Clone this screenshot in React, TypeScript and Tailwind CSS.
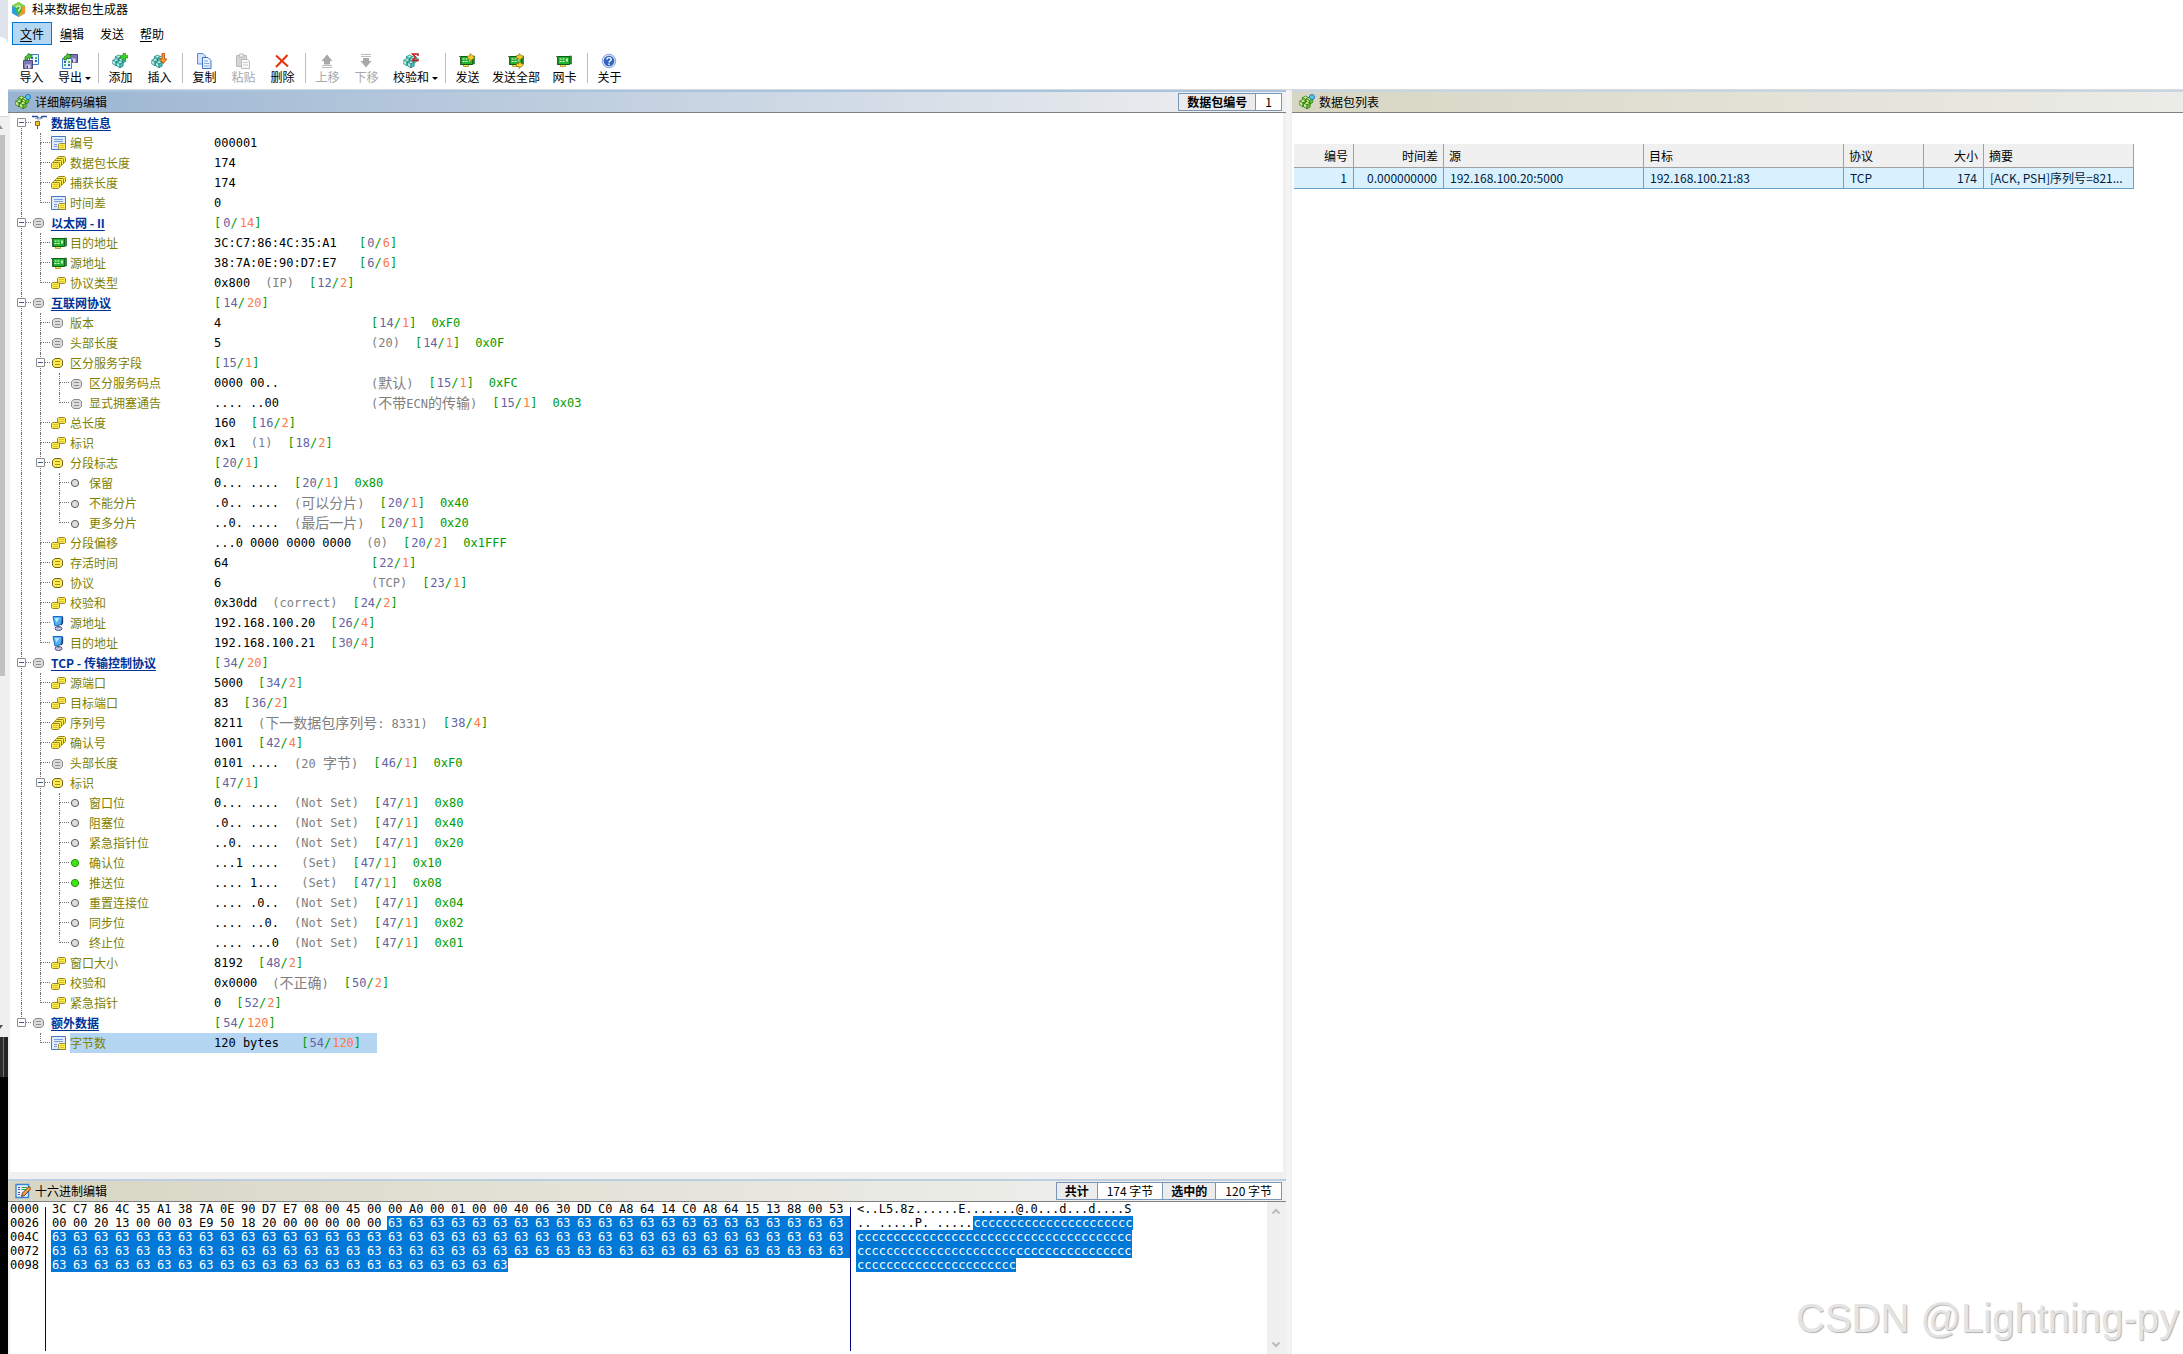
import { Fragment, type ReactNode } from "react";

type IconName = "info" | "page" | "stack" | "pair" | "gray" | "yellow" | "card" | "host" | "bit" | "bitOn";

type Field = {
  label: string;
  icon: IconName;
  value?: string;
  wide?: boolean;
  note?: string;
  range?: [number, number];
  mask?: string;
  selected?: boolean;
  children?: Field[];
};

const tree: Field[] = [
  {
    label: "数据包信息",
    icon: "info",
    children: [
      { label: "编号", icon: "page", value: "000001" },
      { label: "数据包长度", icon: "stack", value: "174" },
      { label: "捕获长度", icon: "stack", value: "174" },
      { label: "时间差", icon: "page", value: "0" },
    ],
  },
  {
    label: "以太网 - II",
    icon: "gray",
    range: [0, 14],
    children: [
      { label: "目的地址", icon: "card", value: "3C:C7:86:4C:35:A1 ", range: [0, 6] },
      { label: "源地址", icon: "card", value: "38:7A:0E:90:D7:E7 ", range: [6, 6] },
      { label: "协议类型", icon: "pair", value: "0x800", note: "(IP)", range: [12, 2] },
    ],
  },
  {
    label: "互联网协议",
    icon: "gray",
    range: [14, 20],
    children: [
      { label: "版本", icon: "gray", value: "4", wide: true, range: [14, 1], mask: "0xF0" },
      { label: "头部长度", icon: "gray", value: "5", wide: true, note: "(20)", range: [14, 1], mask: "0x0F" },
      {
        label: "区分服务字段",
        icon: "yellow",
        range: [15, 1],
        children: [
          { label: "区分服务码点", icon: "gray", value: "0000 00..", wide: true, note: "(默认)", range: [15, 1], mask: "0xFC" },
          { label: "显式拥塞通告", icon: "gray", value: ".... ..00", wide: true, note: "(不带ECN的传输)", range: [15, 1], mask: "0x03" },
        ],
      },
      { label: "总长度", icon: "pair", value: "160", range: [16, 2] },
      { label: "标识", icon: "pair", value: "0x1", note: "(1)", range: [18, 2] },
      {
        label: "分段标志",
        icon: "yellow",
        range: [20, 1],
        children: [
          { label: "保留", icon: "bit", value: "0... ....", range: [20, 1], mask: "0x80" },
          { label: "不能分片", icon: "bit", value: ".0.. ....", note: "(可以分片)", range: [20, 1], mask: "0x40" },
          { label: "更多分片", icon: "bit", value: "..0. ....", note: "(最后一片)", range: [20, 1], mask: "0x20" },
        ],
      },
      { label: "分段偏移", icon: "pair", value: "...0 0000 0000 0000", note: "(0)", range: [20, 2], mask: "0x1FFF" },
      { label: "存活时间", icon: "yellow", value: "64", wide: true, range: [22, 1] },
      { label: "协议", icon: "yellow", value: "6", wide: true, note: "(TCP)", range: [23, 1] },
      { label: "校验和", icon: "pair", value: "0x30dd", note: "(correct)", range: [24, 2] },
      { label: "源地址", icon: "host", value: "192.168.100.20", range: [26, 4] },
      { label: "目的地址", icon: "host", value: "192.168.100.21", range: [30, 4] },
    ],
  },
  {
    label: "TCP - 传输控制协议",
    icon: "gray",
    range: [34, 20],
    children: [
      { label: "源端口", icon: "pair", value: "5000", range: [34, 2] },
      { label: "目标端口", icon: "pair", value: "83", range: [36, 2] },
      { label: "序列号", icon: "stack", value: "8211", note: "(下一数据包序列号: 8331)", range: [38, 4] },
      { label: "确认号", icon: "stack", value: "1001", range: [42, 4] },
      { label: "头部长度", icon: "gray", value: "0101 ....", note: "(20 字节)", range: [46, 1], mask: "0xF0" },
      {
        label: "标识",
        icon: "yellow",
        range: [47, 1],
        children: [
          { label: "窗口位", icon: "bit", value: "0... ....", note: "(Not Set)", range: [47, 1], mask: "0x80" },
          { label: "阻塞位", icon: "bit", value: ".0.. ....", note: "(Not Set)", range: [47, 1], mask: "0x40" },
          { label: "紧急指针位", icon: "bit", value: "..0. ....", note: "(Not Set)", range: [47, 1], mask: "0x20" },
          { label: "确认位", icon: "bitOn", value: "...1 ....", note: " (Set)", range: [47, 1], mask: "0x10" },
          { label: "推送位", icon: "bitOn", value: ".... 1...", note: " (Set)", range: [47, 1], mask: "0x08" },
          { label: "重置连接位", icon: "bit", value: ".... .0..", note: "(Not Set)", range: [47, 1], mask: "0x04" },
          { label: "同步位", icon: "bit", value: ".... ..0.", note: "(Not Set)", range: [47, 1], mask: "0x02" },
          { label: "终止位", icon: "bit", value: ".... ...0", note: "(Not Set)", range: [47, 1], mask: "0x01" },
        ],
      },
      { label: "窗口大小", icon: "pair", value: "8192", range: [48, 2] },
      { label: "校验和", icon: "pair", value: "0x0000", note: "(不正确)", range: [50, 2] },
      { label: "紧急指针", icon: "pair", value: "0", range: [52, 2] },
    ],
  },
  {
    label: "额外数据",
    icon: "gray",
    range: [54, 120],
    children: [{ label: "字节数", icon: "page", value: "120 bytes ", range: [54, 120], selected: true }],
  },
];

const header =
  "3C C7 86 4C 35 A1 38 7A 0E 90 D7 E7 08 00 45 00 00 A0 00 01 00 00 40 06 30 DD C0 A8 64 14 C0 A8 64 15 13 88 00 53 " +
  "00 00 20 13 00 00 03 E9 50 18 20 00 00 00 00 00";
const bytes = [...header.split(" "), ...Array<string>(120).fill("63")];
const selectedFrom = 54;
const perLine = 38;
const lines = Array.from({ length: Math.ceil(bytes.length / perLine) }, (_, i) => {
  const start = i * perLine;
  const row = bytes.slice(start, start + perLine);
  const split = Math.min(Math.max(selectedFrom - start, 0), row.length);
  return {
    offset: start.toString(16).toUpperCase().padStart(4, "0"),
    full: row.length === perLine,
    plain: row.slice(0, split),
    marked: row.slice(split),
  };
});

function toAscii(row: string[]) {
  return row
    .map((hex) => {
      const code = parseInt(hex, 16);
      return code >= 32 && code < 127 ? String.fromCharCode(code) : ".";
    })
    .join("");
}

const packet = ["1", "0.000000000", "192.168.100.20:5000", "192.168.100.21:83", "TCP", "174", "[ACK, PSH]序列号=821..."];
const columns = [
  { title: "编号", cls: "w-[60px] text-right" },
  { title: "时间差", cls: "w-[90px] text-right" },
  { title: "源", cls: "w-[200px] text-left" },
  { title: "目标", cls: "w-[200px] text-left" },
  { title: "协议", cls: "w-[80px] text-left" },
  { title: "大小", cls: "w-[60px] text-right" },
  { title: "摘要", cls: "w-[150px] text-left" },
];

function Svg({ children, className = "h-4 w-4" }: { children: ReactNode; className?: string }) {
  return (
    <svg viewBox="0 0 16 16" className={`shrink-0 ${className}`} fill="none" aria-hidden="true">
      {children}
    </svg>
  );
}

type CubeColors = { light: string; main: string; dark: string };

function Cube({ x, y, light, main, dark }: CubeColors & { x: number; y: number }) {
  return (
    <g transform={`translate(${x} ${y})`} stroke={dark} strokeWidth=".7" strokeLinejoin="round">
      <path d="M0-3.500 3.200-1.800 0 0-3.200-1.800z" fill={light} />
      <path d="M-3.200-1.800 0 0v3.800L-3.200 2z" fill={light} />
      <path d="M3.200-1.800 0 0v3.800L3.200 2z" fill={main} />
      <path d="M-2.200-.500v1.500" stroke="#fff" />
    </g>
  );
}

function Cubes(colors: CubeColors) {
  return (
    <>
      <Cube x={6.500} y={5.500} {...colors} />
      <Cube x={10.500} y={6.500} {...colors} />
      <Cube x={4} y={9} {...colors} />
      <Cube x={8} y={11} {...colors} />
    </>
  );
}

function CubesIcon() {
  return (
    <Svg>
      <Cubes light="#c4f47c" main="#6cc22c" dark="#2a6e14" />
      <circle cx="13" cy="3" r="2.500" fill="#5cc4f4" stroke="#1d78b8" />
    </Svg>
  );
}

const teal = <Cubes light="#a8f0dc" main="#48c0c0" dark="#1a8080" />;

const floppy = (
  <>
    <path d="M.500 7.500h9v8h-9z" fill="#7d78b8" stroke="#4a467e" />
    <path d="M2.500 11.500h5v4h-5z" fill="#d8d8ee" />
    <path d="M3.500 12.500h1.500v3H3.500z" fill="#4a467e" />
  </>
);

const dataSheet = (
  <>
    <path d="M6.500 1.500h9v10h-9z" fill="#eef6ff" stroke="#3b7fd4" />
    <path d="M8 4h2v2H8zM12 7h2v2h-2z" fill="#2466d0" />
    <path d="M12 4h2v2h-2zM8 7h2v2H8z" fill="#46b450" />
  </>
);

const greenArrow = <path d="M2 7V4l3-2V.500L9.500 3 6 6V4.500L4.500 5.500V7z" fill="#54c832" stroke="#1f7a1c" strokeWidth=".8" />;

const board = (
  <>
    <path d="M0 3.500h2M1.500 3v9" stroke="#557755" />
    <path d="M2 3.500h11.500v8H2z" fill="#22b430" stroke="#0d5c17" />
    <path d="M3.500 5.500h2v1h-2zM3.500 8h2v1h-2zM6.500 5.500h2v1h-2zM6.500 8h2v1h-2z" fill="#eaffd8" />
    <path d="M10 5.500h2v3h-2z" fill="#c4f8bc" />
    <path d="M4.500 12v1.500h5V12" fill="#f8e048" stroke="#8c7410" strokeWidth=".6" />
    <path d="M13.500 3h2v8h-2z" fill="#2b8c35" stroke="#0d5c17" strokeWidth=".6" />
  </>
);

function YellowDisc({ x, y }: { x: number; y: number }) {
  return (
    <g transform={`translate(${x} ${y})`}>
      <path d="M1.500.500h6l1 1v4l-1 1h-6l-1-1v-4z" fill="#fdec50" stroke="#7c6a10" strokeWidth=".8" />
      <path d="M2 2.500h5M2 4.500h5" stroke="#d0ac20" strokeWidth=".7" />
    </g>
  );
}

function Pill({ fill, edge, line }: { fill: string; edge: string; line: string }) {
  return (
    <Svg>
      <path d="M4 3.500h5l2.500 2v5l-2.500 2H4l-2.500-2v-5z" fill={fill} stroke={edge} />
      <path d="M4 6.500h5M4 9.500h5" stroke={line} />
    </Svg>
  );
}

function Bit({ fill, edge }: { fill: string; edge: string }) {
  return (
    <Svg>
      <circle cx="5" cy="8" r="3.600" fill={fill} stroke={edge} />
    </Svg>
  );
}

const fieldIcons: Record<IconName, ReactNode> = {
  info: (
    <Svg>
      <path d="M0 1.500h5l1.500 2h2l1.500-2h5" stroke="#2a4c9c" strokeWidth="1.400" />
      <path d="M3 3.500h8M6 4v4" stroke="#9db4d8" />
      <path d="M3.500 6.500h4v4h-4z" fill="#f4c42c" stroke="#8c6a10" />
      <path d="M5.500 11v3" stroke="#6c5a20" />
    </Svg>
  ),
  page: (
    <Svg>
      <path d="M.500 1.500h14v13H.500z" fill="#e0ebfc" stroke="#4a78c0" />
      <path d="M3 4.500h9M3 6.500h9M3 9.500h3M3 11.500h3" stroke="#7c9cdc" />
      <path d="M8.500 8.500h5l1 1v4l-1 1h-5l-1-1v-4z" fill="#fdec50" stroke="#8c7a20" strokeWidth=".8" />
      <path d="M9 10.500h4M9 12.500h4" stroke="#d0ac20" strokeWidth=".7" />
    </Svg>
  ),
  stack: (
    <Svg>
      <YellowDisc x={6} y={1} />
      <YellowDisc x={4} y={3} />
      <YellowDisc x={2} y={5} />
      <YellowDisc x={0} y={7} />
    </Svg>
  ),
  pair: (
    <Svg>
      <YellowDisc x={6} y={2} />
      <YellowDisc x={0} y={7} />
    </Svg>
  ),
  gray: <Pill fill="#dcdcdc" edge="#8a8a8a" line="#8f8f8f" />,
  yellow: <Pill fill="#fdec50" edge="#6e6424" line="#b08c10" />,
  card: <Svg>{board}</Svg>,
  host: (
    <Svg>
      <path d="M2 1.500h9.500L10 9.500 4 11z" fill="#4cb2f4" stroke="#1c6cc4" />
      <path d="M3.500 3h5l-3 4.500z" fill="#bfe6ff" />
      <path d="M11.500 2v6L10 10" stroke="#2a3c7c" strokeWidth="1.300" />
      <ellipse cx="7.500" cy="13.500" rx="3.500" ry="2" fill="#c4c4e4" stroke="#55558c" />
      <path d="M6.500 10.500h2v2h-2z" fill="#55558c" />
    </Svg>
  ),
  bit: <Bit fill="#dedede" edge="#5c5c5c" />,
  bitOn: <Bit fill="#3cea10" edge="#2a8c18" />,
};

const toolIcons = {
  load: (
    <Svg>
      {dataSheet}
      {floppy}
      {greenArrow}
    </Svg>
  ),
  save: (
    <Svg>
      <g transform="translate(6 -6)">{floppy}</g>
      <g transform="translate(-6 4)">{dataSheet}</g>
      {greenArrow}
    </Svg>
  ),
  add: (
    <Svg>
      {teal}
      <path d="M11 0h2.500v2.500H16V5h-2.500v2.500H11V5H8.500V2.500H11z" fill="#35d41c" stroke="#148a10" strokeWidth=".5" />
    </Svg>
  ),
  insert: (
    <Svg>
      {teal}
      <path d="M11 .500h2.500V6H16l-3.700 4.500L8.500 6H11z" fill="#fca024" stroke="#c03c10" strokeWidth=".8" />
    </Svg>
  ),
  copy: (
    <Svg>
      <path d="M1.500.500H7l2.500 2.500v8h-8z" fill="#d4e4fa" stroke="#5c8cd4" />
      <path d="M6.500 4.500H12l3 3v8H6.500z" fill="#eaf2ff" stroke="#3e70c4" />
      <path d="M8 8h4M8 10.500h5.500M8 13h5.500" stroke="#88aade" />
    </Svg>
  ),
  paste: (
    <Svg>
      <path d="M1.500 2.500h10v11h-10z" fill="#d4d4d4" stroke="#bcbcbc" />
      <path d="M4.500 1h4v3h-4z" fill="#f0f0f0" stroke="#bcbcbc" />
      <path d="M6.500 6.500h6l2 2v7h-8z" fill="#fafafa" stroke="#bcbcbc" />
      <path d="M8 9.500h5M8 12h5" stroke="#ccc" />
    </Svg>
  ),
  remove: (
    <Svg>
      <path d="M2 2.500 14 13.500M13.500 2 2 14" stroke="#e8300c" strokeWidth="2" />
    </Svg>
  ),
  up: (
    <Svg>
      <path d="M8 1.500 13.500 8H11v3.500H5V8H2.500z" fill="#a8a8a8" />
      <path d="M3 12.500h10M3 14.500h10" stroke="#bcbcbc" />
    </Svg>
  ),
  down: (
    <Svg>
      <path d="M8 14.500 13.500 8H11V5H5v3H2.500z" fill="#a8a8a8" />
      <path d="M3 1.500h10M3 3.500h10" stroke="#bcbcbc" />
    </Svg>
  ),
  sum: (
    <Svg>
      {teal}
      <path d="M15 3V1H9.500l3 3-3 3.500H15V5.500" stroke="#d01818" strokeWidth="1.500" />
    </Svg>
  ),
  send: (
    <Svg>
      {board}
      <path d="M8.500 3H11V.500L15.500 4.500 11 8.500V6H8.500z" fill="#f8cc28" stroke="#94740c" strokeWidth=".7" />
    </Svg>
  ),
  sendAll: (
    <Svg>
      {board}
      <path d="M8.500 2.500H11V.500l4.500 3.500L11 7.500v-2H8.500zM8.500 10.500H11v-2l4.500 3.500-4.500 3.500v-2H8.500z" fill="#f8cc28" stroke="#94740c" strokeWidth=".7" />
    </Svg>
  ),
  card: <Svg>{board}</Svg>,
  about: (
    <Svg>
      <circle cx="8" cy="8" r="6.800" fill="#d4e0f6" stroke="#8ca8dc" />
      <circle cx="8" cy="8" r="5.300" fill="#3264c0" />
      <path d="M6 6.500C6 4 10.200 4 10.200 6.500 10.200 8 8 8 8 9.500M8 10.500V12" stroke="#fff" strokeWidth="1.400" />
    </Svg>
  ),
};

type Tool = { label: string; icon: keyof typeof toolIcons; cls?: string; menu?: boolean; disabled?: boolean };

const tools: Tool[][] = [
  [
    { label: "导入", icon: "load" },
    { label: "导出", icon: "save", cls: "w-11", menu: true },
  ],
  [
    { label: "添加", icon: "add" },
    { label: "插入", icon: "insert" },
  ],
  [
    { label: "复制", icon: "copy" },
    { label: "粘贴", icon: "paste", disabled: true },
    { label: "删除", icon: "remove" },
  ],
  [
    { label: "上移", icon: "up", disabled: true },
    { label: "下移", icon: "down", disabled: true },
    { label: "校验和", icon: "sum", cls: "w-14", menu: true },
  ],
  [
    { label: "发送", icon: "send" },
    { label: "发送全部", icon: "sendAll", cls: "w-[58px]" },
    { label: "网卡", icon: "card" },
  ],
  [{ label: "关于", icon: "about" }],
];

function ToolButton({ label, icon, cls = "w-[39px]", menu, disabled }: Tool) {
  return (
    <button
      type="button"
      disabled={disabled}
      className={`flex h-9 items-start ${menu ? "justify-between pr-1 pl-[7px]" : "justify-center"} ${cls} disabled:text-[#a9a9a9]`}
    >
      <span className="flex flex-col items-center">
        {toolIcons[icon]}
        <span className="leading-4 whitespace-nowrap">{label}</span>
      </span>
      {menu && <span className="mt-6 border-x-[3px] border-t-[3px] border-x-transparent border-t-black" />}
    </button>
  );
}

function Line({ up = true, down = true, out = false }: { up?: boolean; down?: boolean; out?: boolean }) {
  return (
    <span className="flex h-5 w-[19px] shrink-0 flex-col pl-[9px]">
      <span
        className={`h-[10px] border-dotted border-[#707070] ${up ? "border-l" : ""} ${out ? "border-b" : ""}`}
      />
      <span className={`h-[10px] border-dotted border-[#707070] ${down ? "border-l" : ""}`} />
    </span>
  );
}

function Expander({ up, down, label }: { up: boolean; down: boolean; label: string }) {
  return (
    <span className="relative h-5 shrink-0">
      <Line up={up} down={down} out />
      <button
        type="button"
        aria-label={`折叠${label}`}
        className="absolute top-[5px] left-[5px] flex h-[9px] w-[9px] items-center justify-center rounded-[1px] border border-[#8c8c8c] bg-white"
      >
        <span className="h-px w-[5px] bg-[#3c5a9c]" />
      </button>
    </span>
  );
}

function Note({ text }: { text: string }) {
  const parts = text.split(/([\u4e00-\u9fff]+)/);
  return (
    <span className="text-[#808080]">
      {parts.map((part, i) => (
        <span key={i} className={i % 2 ? "text-[14px]" : ""}>
          {part}
        </span>
      ))}
    </span>
  );
}

function Range({ range, root }: { range: [number, number]; root: boolean }) {
  return (
    <span className={`flex text-[#009c00] ${root ? "gap-x-0.5" : "gap-x-px"}`}>
      <span>[</span>
      <span className="flex">
        <span className="text-[#6464a4]">{range[0]}</span>/
      </span>
      <span className="flex">
        <span className="text-[#ff7846]">{range[1]}</span>]
      </span>
    </span>
  );
}

function Row({ field, guides, last, first }: { field: Field; guides: boolean[]; last: boolean; first: boolean }) {
  const root = guides.length === 0;
  const mark = field.selected ? "bg-[#b4d6f2]" : "";
  return (
    <>
      <li className="grid h-5 grid-cols-[202px_1fr]">
        <span className="flex">
          {guides.map((on, i) => (
            <Line key={i} up={on} down={on} />
          ))}
          {field.children ? (
            <Expander up={!first} down={!last} label={field.label} />
          ) : (
            <Line down={!last} out />
          )}
          <span className="flex w-5 shrink-0 items-center pl-px">{fieldIcons[field.icon]}</span>
          <span className={`flex-1 leading-5 whitespace-nowrap ${mark}`}>
            {root ? (
              <a href="#" className="font-bold text-[#003399] underline underline-offset-2">
                {field.label}
              </a>
            ) : (
              <span className="text-[#808000]">{field.label}</span>
            )}
          </span>
        </span>
        <span
          className={`flex gap-[15px] justify-self-start font-['DejaVu_Sans_Mono','Noto_Sans_CJK_SC',monospace] leading-5 whitespace-pre ${mark} ${field.selected ? "pr-4" : ""}`}
        >
          {field.value && <span className={field.wide ? "w-[142px]" : ""}>{field.value}</span>}
          {field.note && <Note text={field.note} />}
          {field.range && <Range range={field.range} root={root} />}
          {field.mask && <span className="text-[#009c00]">{field.mask}</span>}
        </span>
      </li>
      {field.children && <Rows fields={field.children} guides={[...guides, !last]} />}
    </>
  );
}

function Rows({ fields, guides }: { fields: Field[]; guides: boolean[] }) {
  return (
    <>
      {fields.map((field, i) => (
        <Row
          key={field.label}
          field={field}
          guides={guides}
          first={guides.length === 0 && i === 0}
          last={i === fields.length - 1}
        />
      ))}
    </>
  );
}

function PanelTitle({ icon, title, cls, children }: { icon: ReactNode; title: string; cls: string; children?: ReactNode }) {
  return (
    <header className={`flex shrink-0 items-center border-t-2 border-b border-b-[#808080] bg-linear-to-r ${cls}`}>
      <span className="flex h-5 items-center gap-1 pl-[7px]">
        {icon}
        <h2>{title}</h2>
      </span>
      {children}
    </header>
  );
}

function Stat({ children, strong }: { children: ReactNode; strong?: boolean }) {
  return (
    <span
      className={`border-r border-[#7a96b8] leading-4 last:border-r-0 ${strong ? "bg-[#ececec] px-2 font-bold" : "bg-white px-[9px]"}`}
    >
      {children}
    </span>
  );
}

function ByteCells({ row }: { row: string[] }) {
  return row.map((b, i) => (
    <span key={i} className="w-[21px] pl-px last:w-4">
      {b}
    </span>
  ));
}

function BackgroundEdge() {
  return (
    <aside className="flex w-2 shrink-0 flex-col overflow-hidden bg-black">
      <div className="h-[117px] bg-[#dfe3ec] pt-[37px]">
        <div className="h-20 rounded-tr-lg border-b border-[#d8d8d8] bg-white" />
      </div>
      <div className="flex h-[920px] flex-col bg-[#f0f0f0]">
        <span className="mt-2 w-0 border-r-[3px] border-b-4 border-r-transparent border-b-[#909090]" />
        <span className="mt-1.5 h-[541px] w-[5px] bg-[#c1c1c1]" />
        <span className="mt-auto mb-2 w-0 border-t-4 border-r-[3px] border-t-[#505050] border-r-transparent" />
      </div>
      <div className="h-10 border-r-4 border-[#242424] bg-[#2c2c2c]">
        <div className="ml-auto h-full w-px bg-[#707070]" />
      </div>
    </aside>
  );
}

export default function App() {
  return (
    <div className="flex h-screen overflow-hidden bg-white font-['Noto_Sans_CJK_SC',sans-serif] text-[12px] text-black">
      <BackgroundEdge />
      <div className="flex min-w-0 flex-1 flex-col">
        <div className="flex h-[18px] items-center gap-1.5 pl-[3px]">
          <Svg className="h-[15px] w-[15px]">
            <path d="M8 0 15 4v8l-7 4-7-4V4z" fill="#2f9be0" />
            <path d="M8 0 15 4 8 8 1 4z" fill="#8fd43c" />
            <path d="M8 8 15 4v8l-7 4z" fill="#f09a24" />
            <path d="M8 3 11.500 5v5L8 13l-3-3V5z" fill="#3cb440" />
            <path d="M6 6c0-2.500 4-2.500 4 0 0 2-2 2-2 4" stroke="#f0ffd8" strokeWidth="1.200" />
          </Svg>
          <h1>科来数据包生成器</h1>
        </div>
        <nav className="mt-1 flex h-[23px] pl-1">
          {["文件", "编辑", "发送", "帮助"].map((name, i) => (
            <button
              key={name}
              type="button"
              className={`w-10 border leading-5 ${i === 0 ? "border-[#0078d7] bg-[#b4d7f3]" : "border-transparent"}`}
            >
              <span className={i === 2 ? "" : "underline underline-offset-2"}>{name[0]}</span>
              {name[1]}
            </button>
          ))}
        </nav>
        <div className="flex h-[45px] shrink-0 border-b border-[#d9d9d9] pt-2 pl-1">
          {tools.map((group, i) => (
            <Fragment key={i}>
              {i > 0 && <span className="mx-[2px] mb-1.5 w-0.5 border-r border-[#bdbdbd]" />}
              {group.map((tool) => (
                <ToolButton key={tool.label} {...tool} />
              ))}
            </Fragment>
          ))}
        </div>

        <main className="flex min-h-0 flex-1">
          <div className="flex w-[1278px] shrink-0 flex-col bg-[#f0f0f0]">
            <PanelTitle
              icon={<CubesIcon />}
              title="详细解码编辑"
              cls="border-t-[#a9c4e0] from-[#99b4d1] to-[#f0f0f0] pr-1"
            >
              <span className="ml-auto flex border border-[#7a96b8]">
                <Stat strong>数据包编号</Stat>
                <Stat>1</Stat>
              </span>
            </PanelTitle>
            <section className="mr-[3px] ml-0.5 min-h-0 flex-1 bg-white pl-0.5">
              <ul>
                <Rows fields={tree} guides={[]} />
              </ul>
            </section>
            <section className="mt-[7px] flex h-[175px] shrink-0 flex-col">
              <PanelTitle
                icon={
                  <Svg>
                    <path d="M1 1.500h12.500v13H1z" fill="#e6f0ff" stroke="#3c84d0" strokeWidth="1.400" />
                    <path d="M3 4.500h2M3 6.500h2M3 9.500h2M3 11.500h2" stroke="#5c4ca0" />
                    <path d="M6.500 4.500H12M6.500 6.500H11" stroke="#2ea43c" />
                    <path d="m6.500 13.500 1-3.500L14 3.500 16 5.500 9.500 12.500z" fill="#f49c4c" stroke="#5a2c10" strokeWidth=".9" />
                  </Svg>
                }
                title="十六进制编辑"
                cls="border-t-[#bccfe0] from-[#d7d6c3] to-[#f2f2f2] pr-1"
              >
                <span className="ml-auto flex border border-[#7a96b8]">
                  <Stat strong>共计</Stat>
                  <Stat>174 字节</Stat>
                  <Stat strong>选中的</Stat>
                  <Stat>120 字节</Stat>
                </span>
              </PanelTitle>
              <div className="mr-0.5 ml-0.5 flex min-h-0 flex-1 bg-white font-['DejaVu_Sans_Mono',monospace] leading-[14px] whitespace-pre">
                <div className="w-[35px]">
                  {lines.map((line) => (
                    <div key={line.offset}>{line.offset}</div>
                  ))}
                </div>
                <span className="mt-[5px] mb-[3px] w-px bg-[#000080]" />
                <div className="w-[804px] pl-[5px]">
                  {lines.map((line) => (
                    <div key={line.offset} className="flex">
                      {line.plain.length > 0 && (
                        <span className={`flex ${line.marked.length ? "w-[336px]" : ""}`}>
                          <ByteCells row={line.plain} />
                        </span>
                      )}
                      <span className={`flex bg-[#0078d7] text-white ${line.full && line.marked.length ? "flex-1" : ""}`}>
                        <ByteCells row={line.marked} />
                      </span>
                    </div>
                  ))}
                </div>
                <span className="mt-[5px] mb-[3px] w-px bg-[#000080]" />
                <div className="flex-1 pl-[5px]">
                  {lines.map((line) => (
                    <div key={line.offset} className="flex">
                      {line.plain.length > 0 && <span className="pl-px">{toAscii(line.plain)}</span>}
                      {line.marked.length > 0 && (
                        <span className="bg-[#0078d7] pl-px text-white">{toAscii(line.marked)}</span>
                      )}
                    </div>
                  ))}
                </div>
                <div className="flex w-[17px] flex-col items-center justify-between bg-[#f0f0f0] py-1.5">
                  <Svg className="h-2 w-2">
                    <path d="m1 11 7-7 7 7" stroke="#bcbcbc" strokeWidth="4" />
                  </Svg>
                  <Svg className="h-2 w-2">
                    <path d="m1 5 7 7 7-7" stroke="#bcbcbc" strokeWidth="4" />
                  </Svg>
                </div>
              </div>
            </section>
          </div>

          <div className="w-1 shrink-0 bg-[#f4f4f4]" />
          <div className="flex min-w-0 flex-1 flex-col border-l-2 border-[#f0f0f0]">
            <PanelTitle
              icon={<CubesIcon />}
              title="数据包列表"
              cls="border-t-[#c8d6e2] from-[#d7d6c3] to-[#ecece8]"
            />
            <div className="px-0.5 pt-[31px]">
              <table className="w-[840px] table-fixed border-separate border-spacing-0">
                <thead>
                  <tr className="h-6 bg-[#f0f0f0]">
                    {columns.map((col) => (
                      <th key={col.title} className={`border-r border-b border-[#a0a0a0] px-[5px] font-normal ${col.cls}`}>
                        {col.title}
                      </th>
                    ))}
                  </tr>
                </thead>
                <tbody>
                  <tr className="h-[21px] bg-[#d9f1ff] text-[#001c3c]">
                    {packet.map((cell, i) => (
                      <td
                        key={columns[i].title}
                        className={`border-r border-b border-[#66a0cc] px-1.5 whitespace-nowrap ${columns[i].cls}`}
                      >
                        {cell}
                      </td>
                    ))}
                  </tr>
                </tbody>
              </table>
            </div>
          </div>
        </main>
      </div>
      <p className="pointer-events-none absolute right-1 bottom-2 font-['Liberation_Sans',sans-serif] text-[40px] leading-14 text-[#e4e4e4] [text-shadow:1px_1px_1px_#b0b0b0]">
        CSDN @Lightning-py
      </p>
    </div>
  );
}
